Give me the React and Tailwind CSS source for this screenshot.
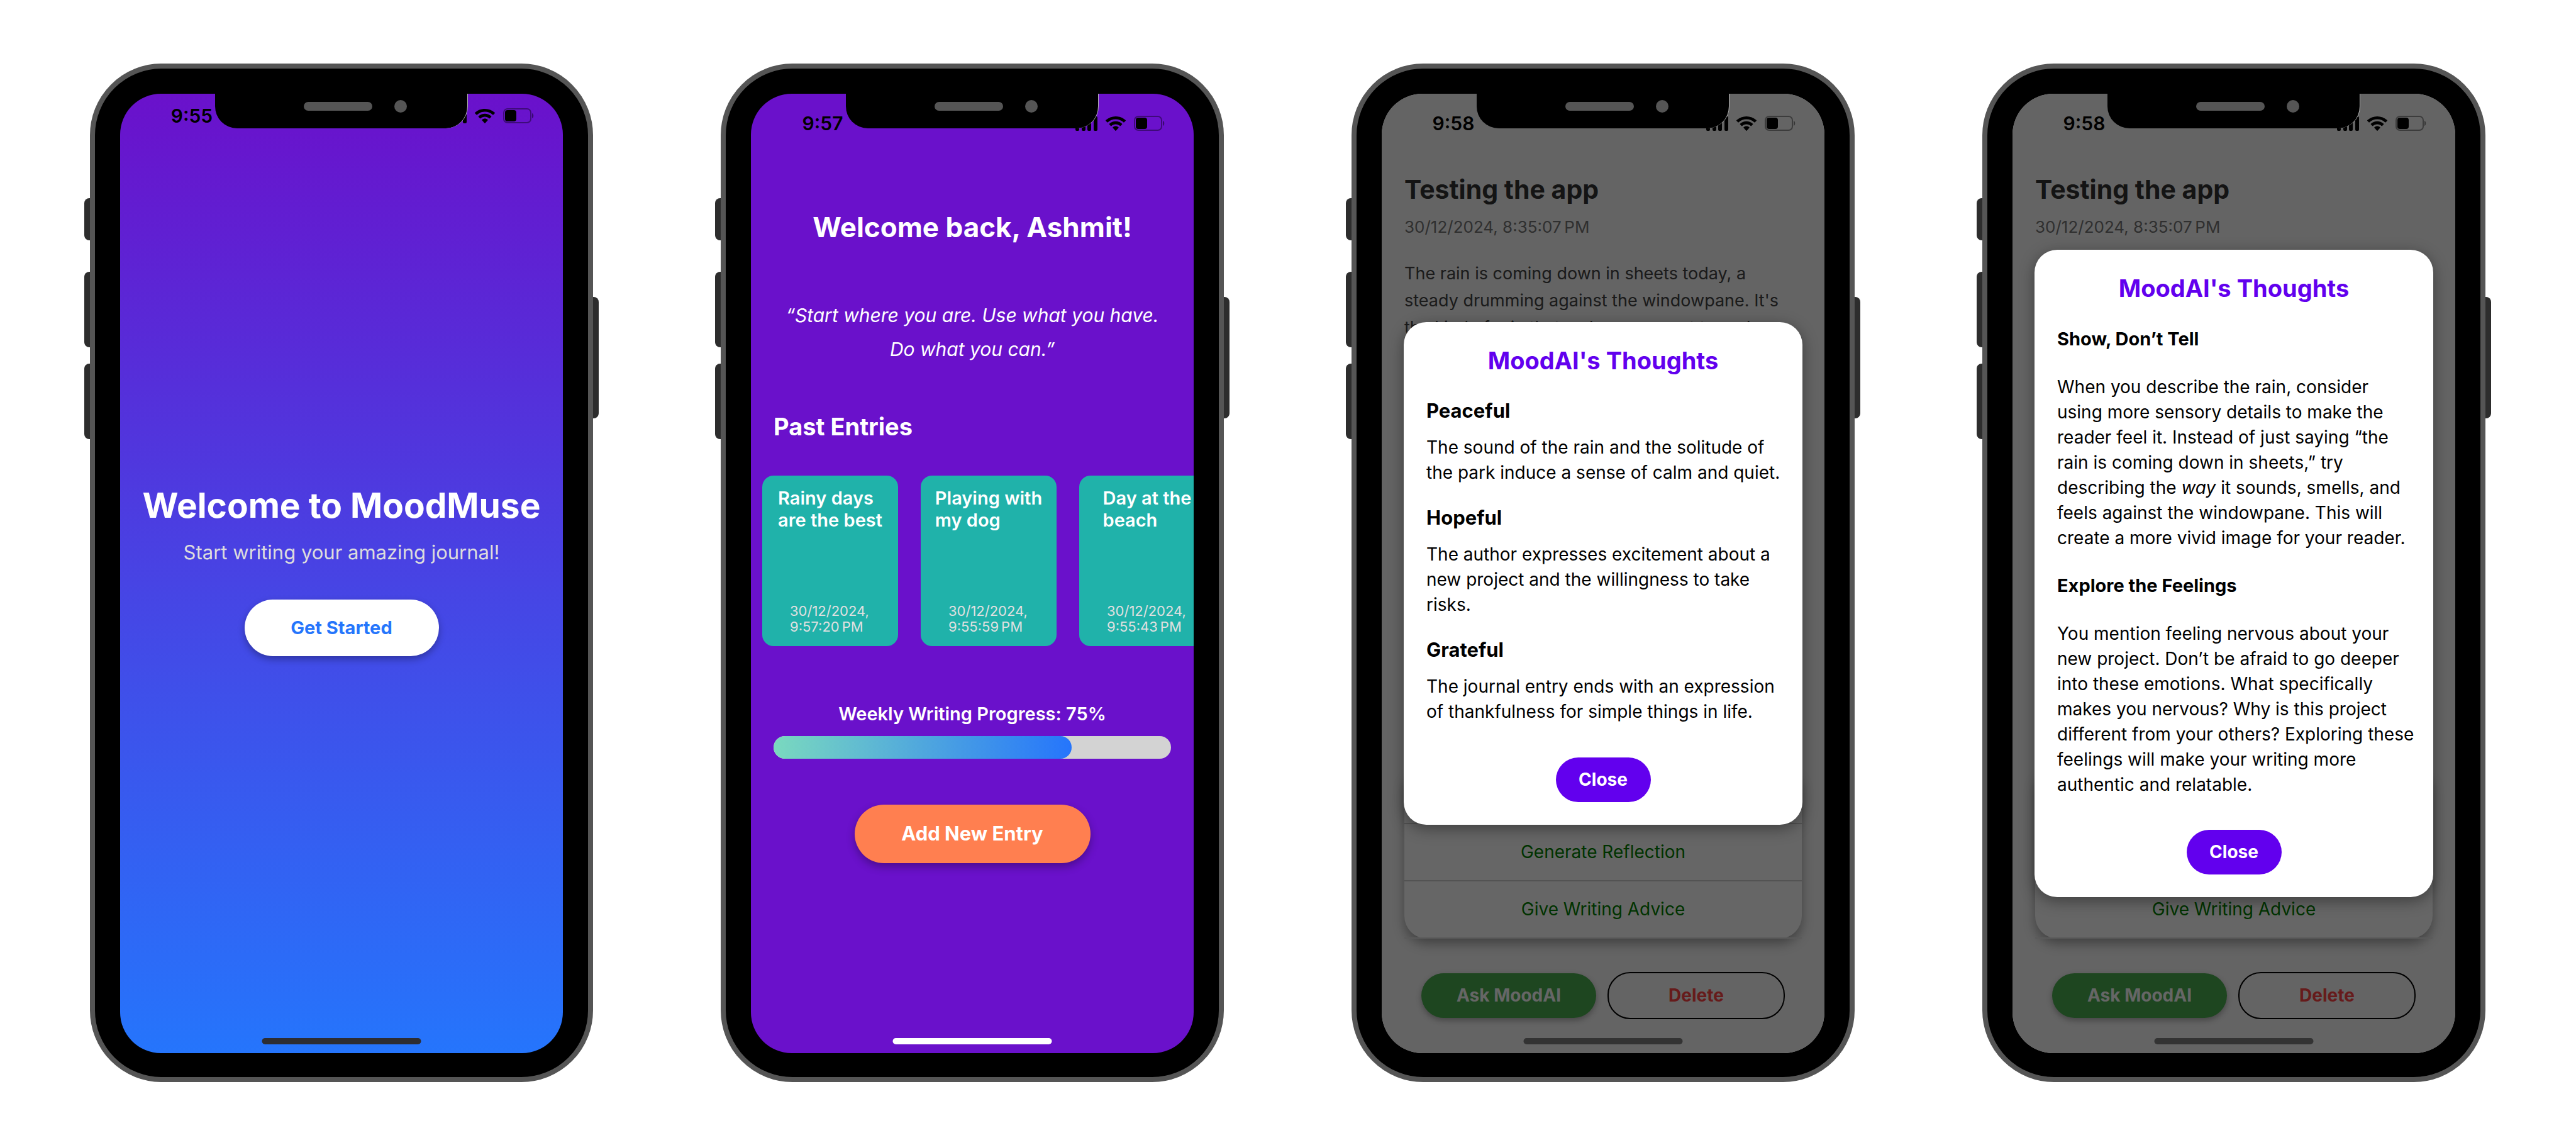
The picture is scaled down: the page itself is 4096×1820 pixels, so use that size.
function StatusBar({ time, low }) {
  return (
    <div
      className={
        "absolute inset-x-0 top-0 z-20 flex items-center justify-between pl-[64px] pr-[45px] text-black " +
        (low ? "h-[95px]" : "h-[71px]")
      }
    >
      <span className="w-[100px] text-center text-[30px] leading-[36px] font-semibold">{time}</span>
      <div className="flex items-center gap-[13px]">
        <svg viewBox="0 0 35 23" className="h-[23px] w-[35px]" fill="currentColor" aria-hidden="true">
          <rect x="0" y="15" width="6" height="8" rx="2" />
          <rect x="10" y="11" width="6" height="12" rx="2" />
          <rect x="19" y="6" width="6" height="17" rx="2" />
          <rect x="29" y="0" width="6" height="23" rx="2" />
        </svg>
        <svg viewBox="0 0 17.15 12.33" className="h-[23px] w-[32px]" fill="currentColor" aria-hidden="true">
          <path d="M8.5713 2.46628C11.0584 2.46639 13.4504 3.38847 15.2529 5.04195C15.3887 5.16963 15.6056 5.16802 15.7393 5.03834L17.0368 3.77487C17.1045 3.70911 17.1422 3.62004 17.1417 3.52735C17.1411 3.43467 17.1023 3.34603 17.0338 3.28104C12.3028 -1.09368 4.83907 -1.09368 0.108056 3.28104C0.039524 3.34598 0.000639766 3.4346 0 3.52728C-0.000624118 3.61996 0.0370483 3.70906 0.104689 3.77487L1.40255 5.03834C1.53615 5.16822 1.75327 5.16983 1.88893 5.04195C3.69167 3.38836 6.08395 2.46628 8.5713 2.46628Z" />
          <path d="M8.56795 6.68656C9.92527 6.68647 11.2341 7.19821 12.2403 8.12234C12.3763 8.25347 12.5907 8.25063 12.7234 8.11594L14.0106 6.79681C14.0784 6.72762 14.116 6.63375 14.115 6.53619C14.114 6.43863 14.0746 6.34555 14.0054 6.27777C10.9416 3.38683 6.19688 3.38683 3.13305 6.27777C3.06384 6.34555 3.02435 6.43868 3.02345 6.53627C3.02254 6.63386 3.06028 6.72771 3.12822 6.79681L4.41513 8.11594C4.54778 8.25063 4.76215 8.25347 4.89823 8.12234C5.90368 7.19882 7.21152 6.68713 8.56795 6.68656Z" />
          <path d="M11.0924 9.48011C11.0943 9.58546 11.0572 9.68703 10.9899 9.76084L8.81327 12.2156C8.74946 12.2877 8.66247 12.3283 8.5717 12.3283C8.48093 12.3283 8.39394 12.2877 8.33013 12.2156L6.15314 9.76084C6.08585 9.68697 6.04879 9.58537 6.0507 9.48002C6.05262 9.37467 6.09334 9.27494 6.16324 9.20409C7.55356 7.92363 9.58984 7.92363 10.9802 9.20409C11.05 9.27499 11.0906 9.37476 11.0924 9.48011Z" />
        </svg>
        <svg viewBox="0 0 50 24" className="h-[24px] w-[50px]" fill="currentColor" aria-hidden="true">
          <rect x="1" y="1" width="43" height="22" rx="6" fill="none" stroke="currentColor" strokeOpacity="0.4" strokeWidth="2" />
          <rect x="3" y="3" width="18" height="18" rx="4" />
          <path d="M46 8c3 1 3 7 0 8z" fillOpacity="0.45" />
        </svg>
      </div>
    </div>
  );
}

function Notch() {
  return (
    <div className="absolute inset-x-0 top-0 z-30 flex justify-center">
      <div className="relative h-[55px] w-[402px] rounded-b-[35px] border-r border-white/70 bg-black">
        <div className="absolute top-[13px] left-[141px] h-[14px] w-[109px] rounded-full bg-[#555555]" />
        <div className="absolute top-[10px] left-[285px] size-[20px] rounded-full bg-[#555555]" />
      </div>
    </div>
  );
}

function Phone({ time, low = true, screen, indicator, children }) {
  return (
    <section className="relative min-w-0">
      <div className="absolute top-[214px] -left-[9px] h-[67px] w-[20px] rounded-l-[8px] bg-[#2d2d2d]" />
      <div className="absolute top-[331px] -left-[9px] h-[120px] w-[20px] rounded-l-[8px] bg-[#2d2d2d]" />
      <div className="absolute top-[477px] -left-[9px] h-[120px] w-[20px] rounded-l-[8px] bg-[#2d2d2d]" />
      <div className="absolute top-[371px] -right-[9px] h-[193px] w-[20px] rounded-r-[8px] bg-[#2d2d2d]" />
      <div className="relative rounded-[114px] border-8 border-[#555555] bg-black px-[40px] pt-[40px] pb-[38px]">
        <div className={"relative flex min-h-[1525px] flex-col overflow-hidden rounded-[65px] " + screen}>
          <StatusBar time={time} low={low} />
          <Notch />
          {children}
          <div className={"absolute bottom-[14px] left-1/2 z-30 h-[10px] w-[253px] -translate-x-1/2 rounded-full " + indicator} />
        </div>
      </div>
    </section>
  );
}

function EntryCard({ title, time }) {
  return (
    <article className="flex h-[271px] w-[216px] shrink-0 flex-col items-center justify-between rounded-[18px] bg-[#20b2aa] py-[18px]">
      <h3 className="text-[29px] leading-[35px] font-semibold whitespace-pre-line text-white">{title}</h3>
      <p className="w-[128px] text-[22px] leading-[25px] whitespace-nowrap text-[#e0e0e0]">
        30/12/2024,
        <br />
        {time}
      </p>
    </article>
  );
}

function Action({ label }) {
  return (
    <button
      aria-hidden={!label}
      tabIndex={label ? 0 : -1}
      className="h-[91px] border-b-2 border-[#d0d0d0] text-[28px] leading-[36px] text-[#008000] last:border-[#e0e0e0]"
    >
      {label}
    </button>
  );
}

function Entry({ excerpt, actions, children }) {
  return (
    <>
      <div className="flex flex-1 flex-col px-[36px] pt-[126px]">
        <h1 className="text-[41px] leading-[52px] font-bold text-[#333333]">Testing the app</h1>
        <p className="mt-[18px] text-[26px] leading-[32px] text-[#777777]">30/12/2024, 8:35:07{"\u202f"}PM</p>
        <p className="mt-[36px] h-0 flex-1 overflow-hidden text-[27px] leading-[43px] whitespace-pre-line text-[#444444]">{excerpt}</p>
        <div className="flex flex-col rounded-[36px] bg-white shadow-[0_8px_18px_rgba(0,0,0,0.35)]">
          {actions.map((label, i) => (
            <Action key={i} label={label} />
          ))}
        </div>
        <div className="mt-[53px] mb-[54px] flex items-center gap-[18px] px-[27px]">
          <button className="h-[71px] flex-1 rounded-[36px] bg-[#4caf50] text-[28px] leading-[36px] font-bold text-white shadow-[0_4px_10px_rgba(0,0,0,0.3)]">
            Ask MoodAI
          </button>
          <button className="h-[75px] flex-1 rounded-[36px] border-2 border-black text-[28px] leading-[36px] font-bold text-[#ff4444]">Delete</button>
        </div>
      </div>
      <div className="absolute inset-0 z-10 flex items-center bg-black/60 px-[35px]">
        <div
          role="dialog"
          aria-label="MoodAI's Thoughts"
          className="flex w-full flex-col rounded-[36px] bg-white p-[36px] text-[28px] leading-[40px] whitespace-nowrap text-black shadow-[0_6px_24px_rgba(0,0,0,0.4)]"
        >
          <h2 className="text-center text-[38px] leading-[50px] font-bold text-[#6200ee]">MoodAI's Thoughts</h2>
          {children}
          <button className="h-[71px] w-[151px] self-center rounded-full bg-[#6200ee] text-[28px] leading-[36px] font-bold text-white">
            Close
          </button>
        </div>
      </div>
    </>
  );
}

function Mood({ name, children }) {
  return (
    <div>
      <h3 className="mb-[19px] text-[31px] leading-[38px] font-bold">{name}</h3>
      <p>{children}</p>
    </div>
  );
}

export default function App() {
  return (
    <main className="grid min-h-screen grid-cols-4 content-center gap-[203px] bg-white pr-[144px] pl-[143px] font-['Inter',sans-serif]">
      <Phone time="9:55" low={false} screen="bg-linear-to-b/srgb from-[#6a11cb] to-[#2575fc]" indicator="bg-[#2d2d32]">
        <div className="flex flex-1 flex-col items-center justify-center pb-[12px]">
          <h1 className="text-[55px] leading-[70px] font-bold whitespace-nowrap text-white">Welcome to MoodMuse</h1>
          <p className="mt-[20px] text-[31px] leading-[40px] text-[#dddddd]">Start writing your amazing journal!</p>
          <button className="mt-[55px] h-[90px] w-[309px] rounded-full bg-white text-[29px] leading-[36px] font-bold text-[#2575fc] shadow-[0_5px_12px_rgba(0,0,0,0.3)]">
            Get Started
          </button>
        </div>
      </Phone>

      <Phone time="9:57" screen="bg-[#6a11cb]" indicator="bg-white">
        <div className="flex flex-1 flex-col px-[36px] pt-[186px] text-white">
          <h1 className="text-center text-[44px] leading-[52px] font-bold">Welcome back, Ashmit!</h1>
          <p className="mt-[87px] text-center text-[30px] leading-[54px] whitespace-nowrap italic">
            “Start where you are. Use what you have.
            <br />
            Do what you can.”
          </p>
          <h2 className="mt-[74px] text-[38px] leading-[44px] font-bold">Past Entries</h2>
          <div className="-mx-[36px] mt-[56px] flex gap-[36px] overflow-hidden pl-[18px]">
            <EntryCard title={"Rainy days\nare the best"} time={"9:57:20\u202fPM"} />
            <EntryCard title={"Playing with\nmy dog"} time={"9:55:59\u202fPM"} />
            <EntryCard title={"Day at the\nbeach"} time={"9:55:43\u202fPM"} />
          </div>
          <p className="mt-[90px] text-center text-[29px] leading-[36px] font-semibold">Weekly Writing Progress: 75%</p>
          <div
            role="progressbar"
            aria-valuenow={75}
            aria-valuemin={0}
            aria-valuemax={100}
            aria-label="Weekly Writing Progress"
            className="mt-[17px] h-[36px] overflow-hidden rounded-[18px] bg-[#d3d3d3]"
          >
            <div className="h-full w-3/4 rounded-[18px] bg-linear-to-r/srgb from-[#7ad9bf] to-[#2575fc]" />
          </div>
          <button className="mt-[73px] h-[93px] w-[375px] self-center rounded-full bg-[#ff7f50] text-[31px] leading-[40px] font-bold shadow-[0_6px_14px_rgba(0,0,0,0.3)]">
            Add New Entry
          </button>
        </div>
      </Phone>

      <Phone time="9:58" screen="bg-[#f9f9f9]" indicator="bg-[#333333]">
        <Entry
          excerpt={
            "The rain is coming down in sheets today, a\nsteady drumming against the windowpane. It's\nthe kind of rain that makes you want to curl"
          }
          actions={["", "Generate Reflection", "Give Writing Advice"]}
        >
          <div className="mt-[36px] mb-[53px] flex flex-col gap-[33px]">
            <Mood name="Peaceful">
              The sound of the rain and the solitude of
              <br />
              the park induce a sense of calm and quiet.
            </Mood>
            <Mood name="Hopeful">
              The author expresses excitement about a
              <br />
              new project and the willingness to take
              <br />
              risks.
            </Mood>
            <Mood name="Grateful">
              The journal entry ends with an expression
              <br />
              of thankfulness for simple things in life.
            </Mood>
          </div>
        </Entry>
      </Phone>

      <Phone time="9:58" screen="bg-[#f9f9f9]" indicator="bg-[#333333]">
        <Entry excerpt="" actions={["", "", "Give Writing Advice"]}>
          <div className="mt-[36px] mb-[52px] flex flex-col gap-[36px]">
            <h3 className="text-[29px] font-bold">Show, Don’t Tell</h3>
            <p>
              When you describe the rain, consider
              <br />
              using more sensory details to make the
              <br />
              reader feel it. Instead of just saying “the
              <br />
              rain is coming down in sheets,” try
              <br />
              describing the <em>way</em> it sounds, smells, and
              <br />
              feels against the windowpane. This will
              <br />
              create a more vivid image for your reader.
            </p>
            <h3 className="text-[29px] font-bold">Explore the Feelings</h3>
            <p>
              You mention feeling nervous about your
              <br />
              new project. Don’t be afraid to go deeper
              <br />
              into these emotions. What specifically
              <br />
              makes you nervous? Why is this project
              <br />
              different from your others? Exploring these
              <br />
              feelings will make your writing more
              <br />
              authentic and relatable.
            </p>
          </div>
        </Entry>
      </Phone>
    </main>
  );
}
